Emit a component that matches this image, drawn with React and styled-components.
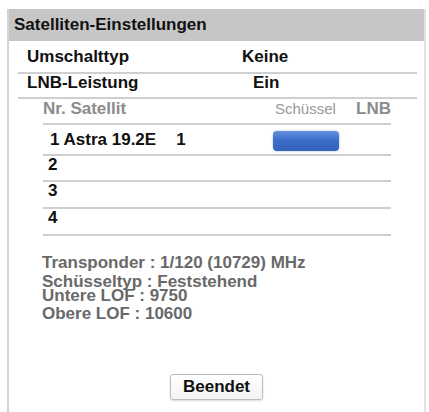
import React from 'react';
import styled, { createGlobalStyle } from 'styled-components';

const Global = createGlobalStyle`
  html, body { margin: 0; padding: 0; background: #ffffff; }
  body { font-family: "Liberation Sans", Arial, sans-serif; }
`;

const Screen = styled.div`
  width: 429px;
  height: 412px;
  padding: 9px 3px 0 7px;
  box-sizing: border-box;
  background: #fff;
`;

const Panel = styled.div`
  height: 403px;
  border-left: 2px solid #d4d4d4;
  border-right: 2px solid #e2e2e2;
  display: flex;
  flex-direction: column;
`;

const Header = styled.div`
  height: 32px;
  background: #c6c6c6;
  display: flex;
  align-items: center;
  padding-left: 5px;
  font-weight: bold;
  font-size: 17px;
  color: #111;
`;

const SettingRow = styled.div`
  height: ${p => p.$h}px;
  display: grid;
  grid-template-columns: ${p => p.$valueAt}px 1fr;
  align-items: ${p => (p.$top ? 'start' : 'center')};
  line-height: 17px;
  margin: 0 7px 0 9px;
  padding-left: 9px;
  border-bottom: 2px solid #cfcfcf;
  font-weight: bold;
  font-size: 17px;
  color: #111;
`;

const Table = styled.div`
  display: flex;
  flex-direction: column;
  margin: 0 33px 0 34px;
`;

const HeadRow = styled.div`
  height: 23px;
  display: grid;
  grid-template-columns: 232px 81px 1fr;
  align-items: start;
  line-height: 17px;
  padding-top: 1px;
  color: #8c8c8c;
  border-bottom: 2px solid #cfcfcf;
`;

const HeadCell = styled.span`
  font-weight: ${p => (p.$light ? 'normal' : 'bold')};
  font-size: ${p => (p.$light ? '15px' : '17px')};
  color: ${p => (p.$light ? '#999' : '#8c8c8c')};
`;

const SatRow = styled.div`
  height: ${p => p.$h}px;
  display: grid;
  grid-template-columns: 225px 1fr;
  align-items: ${p => (p.$first ? 'center' : 'start')};
  line-height: 17px;
  border-bottom: 2px solid #cfcfcf;
  font-size: 17px;
  font-weight: bold;
  color: #111;
  padding-left: 5px;
`;

const SatName = styled.span`
  display: flex;
  gap: 20px;
  padding-left: ${p => (p.$first ? '2px' : '0')};
`;

const DishBar = styled.div`
  width: 66px;
  height: 20px;
  border-radius: 4px;
  margin-top: 2px;
  background: linear-gradient(#6292de, #3b6dc9 45%, #3662bd);
  box-shadow: 0 0 2px rgba(40, 80, 160, 0.5);
`;

const Info = styled.div`
  margin: 18px 0 0 33px;
  display: flex;
  flex-direction: column;
  font-size: 17px;
  font-weight: bold;
  color: #696969;
  line-height: 18px;
`;

const InfoLine = styled.div`
  margin-top: ${p => p.$shift || 0}px;
`;

const Footer = styled.div`
  margin-top: auto;
  margin-bottom: 12px;
  display: flex;
  justify-content: center;
`;

const Button = styled.button`
  width: 93px;
  height: 26px;
  padding: 0;
  font-family: "Liberation Sans", Arial, sans-serif;
  font-size: 17px;
  font-weight: bold;
  color: #111;
  background: linear-gradient(#ffffff, #f3f3f3);
  border: 1px solid #bcbcbc;
  border-radius: 3px;
  box-shadow: 0 1px 2px rgba(0, 0, 0, 0.15);
`;

const sats = [
  { nr: '1', name: 'Astra 19.2E', lnb: '1', dish: true, h: 29 },
  { nr: '2', h: 24 },
  { nr: '3', h: 25 },
  { nr: '4', h: 25 },
];

export default function App() {
  return (
    <Screen>
      <Global />
      <Panel>
        <Header>Satelliten-Einstellungen</Header>
        <SettingRow $valueAt={215} $h={31}>
          <span>Umschalttyp</span>
          <span>Keine</span>
        </SettingRow>
        <SettingRow $valueAt={226} $h={23} $top>
          <span>LNB-Leistung</span>
          <span>Ein</span>
        </SettingRow>
        <Table>
          <HeadRow>
            <HeadCell>Nr. Satellit</HeadCell>
            <HeadCell $light>Schüssel</HeadCell>
            <HeadCell>LNB</HeadCell>
          </HeadRow>
          {sats.map((s, i) => (
            <SatRow key={s.nr} $first={i === 0} $h={s.h}>
              <SatName $first={i === 0}>
                <span>{s.name ? `${s.nr} ${s.name}` : s.nr}</span>
                {s.lnb && <span>{s.lnb}</span>}
              </SatName>
              {s.dish ? <DishBar /> : <span />}
            </SatRow>
          ))}
        </Table>
        <Info>
          <InfoLine>Transponder : 1/120 (10729) MHz</InfoLine>
          <InfoLine $shift={1}>Schüsseltyp : Feststehend</InfoLine>
          <InfoLine $shift={-4}>Untere LOF : 9750</InfoLine>
          <InfoLine>Obere LOF : 10600</InfoLine>
        </Info>
        <Footer>
          <Button>Beendet</Button>
        </Footer>
      </Panel>
    </Screen>
  );
}
